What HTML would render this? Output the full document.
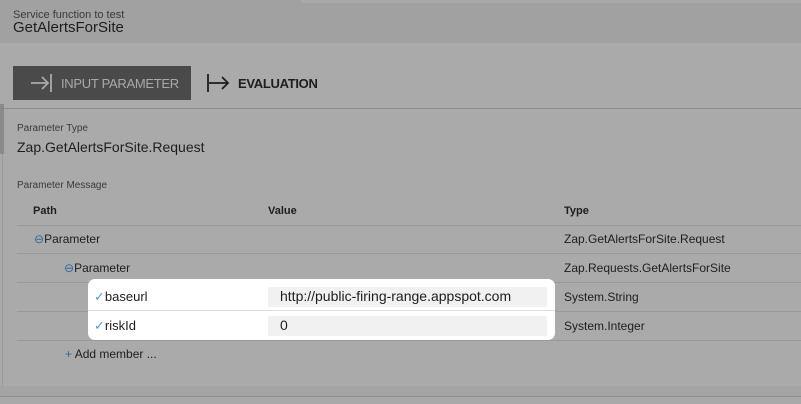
<!DOCTYPE html>
<html><head><style>
*{margin:0;padding:0;box-sizing:border-box}
body{width:801px;height:404px;background:#aaaaaa;font-family:"Liberation Sans",sans-serif;color:#1e1e1e;position:relative;overflow:hidden}
.a{position:absolute;white-space:nowrap}
.hl{position:absolute;height:1px;background:#999}
</style></head><body>
<div class="a" style="left:0;top:0;width:801px;height:43px;background:#a1a1a1"></div>
<div class="a" style="left:301px;top:0;width:500px;height:3px;background:#a9a9a9"></div>
<div class="a" style="left:13px;top:9px;font-size:11px;color:#3a3a3a">Service function to test</div>
<div class="a" style="left:13px;top:19px;font-size:15px">GetAlertsForSite</div>

<div class="a" style="left:13px;top:66px;width:178px;height:34px;background:#4a4a4a"></div>
<svg class="a" style="left:30px;top:72px" width="24" height="22" viewBox="0 0 24 22"><path d="M1 11H18M12 5l6 6-6 6M21 2v18" stroke="#a9a9a9" stroke-width="1.8" fill="none"/></svg>
<div class="a" style="left:61px;top:76px;font-size:13px;color:#a9a9a9;letter-spacing:-0.3px">INPUT PARAMETER</div>
<svg class="a" style="left:206px;top:72px" width="24" height="22" viewBox="0 0 24 22"><path d="M2 2v18M3 11H22M16 5l6 6-6 6" stroke="#1e1e1e" stroke-width="1.8" fill="none"/></svg>
<div class="a" style="left:238px;top:76px;font-size:13px;font-weight:bold;color:#1e1e1e;letter-spacing:-0.3px">EVALUATION</div>
<div class="hl" style="left:0;top:108px;width:801px;background:#8e8e8e"></div>
<div class="a" style="left:0;top:104px;width:4px;height:50px;background:#8a8a8a"></div>
<div class="a" style="left:2px;top:154px;width:1px;height:232px;background:#999"></div>

<div class="a" style="left:17px;top:123px;font-size:10px;color:#3a3a3a">Parameter Type</div>
<div class="a" style="left:17px;top:139px;font-size:14px">Zap.GetAlertsForSite.Request</div>
<div class="a" style="left:17px;top:180px;font-size:10px;color:#3a3a3a">Parameter Message</div>

<div class="a" style="left:33px;top:205px;font-size:11px;font-weight:bold">Path</div>
<div class="a" style="left:268px;top:205px;font-size:11px;font-weight:bold">Value</div>
<div class="a" style="left:564px;top:205px;font-size:11px;font-weight:bold">Type</div>
<div class="hl" style="left:17px;top:225px;width:784px"></div>
<div class="hl" style="left:17px;top:253px;width:784px"></div>
<div class="hl" style="left:17px;top:282px;width:784px"></div>
<div class="hl" style="left:17px;top:311px;width:784px"></div>
<div class="hl" style="left:17px;top:340px;width:784px"></div>

<div class="a" style="left:34px;top:232px;font-size:12px"><span style="color:#2d6aa0">⊖</span>Parameter</div>
<div class="a" style="left:564px;top:232px;font-size:12px">Zap.GetAlertsForSite.Request</div>
<div class="a" style="left:64px;top:261px;font-size:12px"><span style="color:#2d6aa0">⊖</span>Parameter</div>
<div class="a" style="left:564px;top:261px;font-size:12px">Zap.Requests.GetAlertsForSite</div>

<div class="a" style="left:88px;top:279px;width:467px;height:61px;background:#fff;border-radius:7px"></div>
<div class="a" style="left:88px;top:310px;width:467px;height:1px;background:#ddd"></div>
<div class="a" style="left:268px;top:287px;width:279px;height:20px;background:#f1f1f1;border-radius:2px"></div>
<div class="a" style="left:268px;top:316px;width:279px;height:20px;background:#f1f1f1;border-radius:2px"></div>
<div class="a" style="left:94px;top:289px;font-size:13px"><span style="color:#4a9be0">✓</span>baseurl</div>
<div class="a" style="left:94px;top:318px;font-size:13px"><span style="color:#4a9be0">✓</span>riskId</div>
<div class="a" style="left:280px;top:288px;font-size:14px">http://public-firing-range.appspot.com</div>
<div class="a" style="left:280px;top:317px;font-size:14px">0</div>
<div class="a" style="left:564px;top:290px;font-size:12px">System.String</div>
<div class="a" style="left:564px;top:319px;font-size:12px">System.Integer</div>

<div class="a" style="left:65px;top:347px;font-size:12px"><span style="color:#2d6aa0">+</span> Add member ...</div>

<div class="a" style="left:0;top:386px;width:801px;height:10px;background:#a4a4a4"></div>
<div class="hl" style="left:0;top:396px;width:801px;background:#909090"></div>
<div class="a" style="left:0;top:397px;width:801px;height:7px;background:#a9a9a9"></div>
</body></html>
